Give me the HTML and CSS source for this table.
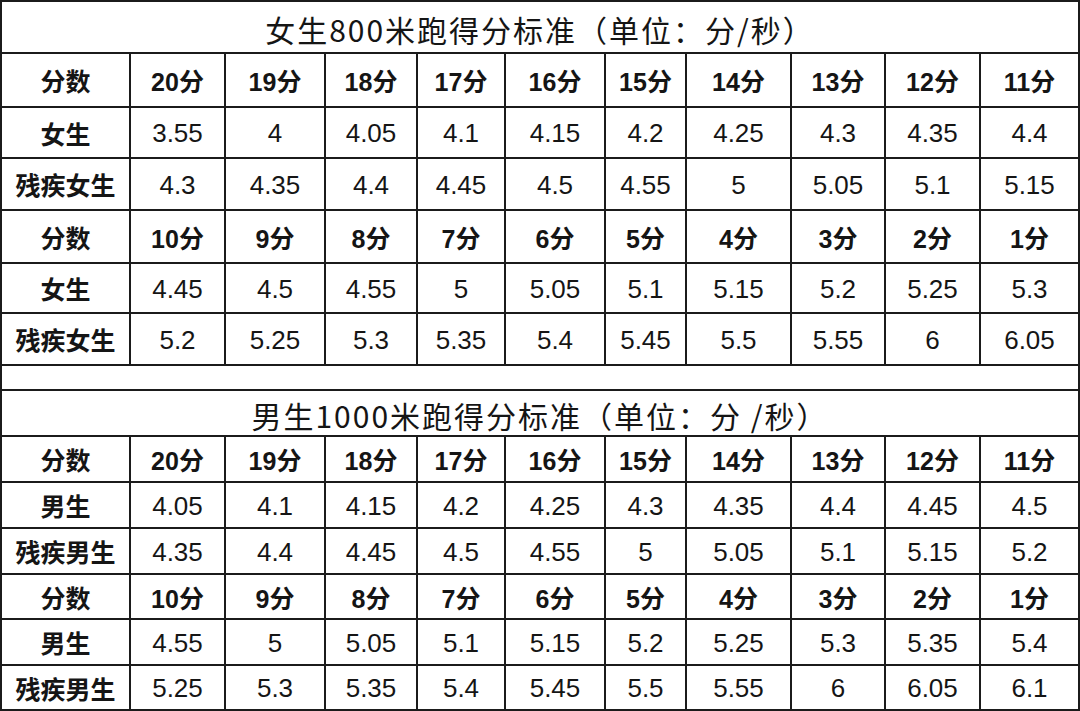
FILE: index.html
```html
<!DOCTYPE html>
<html lang="zh-CN">
<head>
<meta charset="utf-8">
<title>800米/1000米跑得分标准</title>
<link rel="stylesheet" href="styles.css">
</head>
<body>
<div class="sheet">
  <div class="title">女生800米跑得分标准（单位：分/秒）</div>

  <div class="c b">分数</div><div class="c b">20分</div><div class="c b">19分</div><div class="c b">18分</div><div class="c b">17分</div><div class="c b">16分</div><div class="c b">15分</div><div class="c b">14分</div><div class="c b">13分</div><div class="c b">12分</div><div class="c b">11分</div>

  <div class="c b">女生</div><div class="c">3.55</div><div class="c">4</div><div class="c">4.05</div><div class="c">4.1</div><div class="c">4.15</div><div class="c">4.2</div><div class="c">4.25</div><div class="c">4.3</div><div class="c">4.35</div><div class="c">4.4</div>

  <div class="c b">残疾女生</div><div class="c">4.3</div><div class="c">4.35</div><div class="c">4.4</div><div class="c">4.45</div><div class="c">4.5</div><div class="c">4.55</div><div class="c">5</div><div class="c">5.05</div><div class="c">5.1</div><div class="c">5.15</div>

  <div class="c b">分数</div><div class="c b">10分</div><div class="c b">9分</div><div class="c b">8分</div><div class="c b">7分</div><div class="c b">6分</div><div class="c b">5分</div><div class="c b">4分</div><div class="c b">3分</div><div class="c b">2分</div><div class="c b">1分</div>

  <div class="c b">女生</div><div class="c">4.45</div><div class="c">4.5</div><div class="c">4.55</div><div class="c">5</div><div class="c">5.05</div><div class="c">5.1</div><div class="c">5.15</div><div class="c">5.2</div><div class="c">5.25</div><div class="c">5.3</div>

  <div class="c b">残疾女生</div><div class="c">5.2</div><div class="c">5.25</div><div class="c">5.3</div><div class="c">5.35</div><div class="c">5.4</div><div class="c">5.45</div><div class="c">5.5</div><div class="c">5.55</div><div class="c">6</div><div class="c">6.05</div>

  <div class="spacer"></div>

  <div class="title">男生1000米跑得分标准（单位：分 /秒）</div>

  <div class="c b">分数</div><div class="c b">20分</div><div class="c b">19分</div><div class="c b">18分</div><div class="c b">17分</div><div class="c b">16分</div><div class="c b">15分</div><div class="c b">14分</div><div class="c b">13分</div><div class="c b">12分</div><div class="c b">11分</div>

  <div class="c b">男生</div><div class="c">4.05</div><div class="c">4.1</div><div class="c">4.15</div><div class="c">4.2</div><div class="c">4.25</div><div class="c">4.3</div><div class="c">4.35</div><div class="c">4.4</div><div class="c">4.45</div><div class="c">4.5</div>

  <div class="c b">残疾男生</div><div class="c">4.35</div><div class="c">4.4</div><div class="c">4.45</div><div class="c">4.5</div><div class="c">4.55</div><div class="c">5</div><div class="c">5.05</div><div class="c">5.1</div><div class="c">5.15</div><div class="c">5.2</div>

  <div class="c b">分数</div><div class="c b">10分</div><div class="c b">9分</div><div class="c b">8分</div><div class="c b">7分</div><div class="c b">6分</div><div class="c b">5分</div><div class="c b">4分</div><div class="c b">3分</div><div class="c b">2分</div><div class="c b">1分</div>

  <div class="c b">男生</div><div class="c">4.55</div><div class="c">5</div><div class="c">5.05</div><div class="c">5.1</div><div class="c">5.15</div><div class="c">5.2</div><div class="c">5.25</div><div class="c">5.3</div><div class="c">5.35</div><div class="c">5.4</div>

  <div class="c b">残疾男生</div><div class="c">5.25</div><div class="c">5.3</div><div class="c">5.35</div><div class="c">5.4</div><div class="c">5.45</div><div class="c">5.5</div><div class="c">5.55</div><div class="c">6</div><div class="c">6.05</div><div class="c">6.1</div>
</div>
</body>
</html>
```

FILE: styles.css
```css
html, body {
  margin: 0;
  padding: 0;
  background: #ffffff;
}

.sheet {
  box-sizing: border-box;
  width: 1080px;
  height: 711px;
  display: grid;
  grid-template-columns: 127px 93px 98px 90px 86px 98px 79px 103px 92px 93px 97px;
  grid-template-rows: 50px 52px 49px 50px 51px 48px 50px 23px 44px 44px 44px 44px 43px 44px 43px;
  gap: 2px;
  padding: 2px;
  background: #1b1b1b;
  font-family: "Liberation Sans", "Noto Sans CJK SC", sans-serif;
  color: #151515;
}

.c {
  background: #ffffff;
  display: flex;
  align-items: center;
  justify-content: center;
  font-size: 26px;
  font-weight: 400;
  padding-top: 2px;
  box-sizing: border-box;
  white-space: nowrap;
}

.b {
  font-size: 25px;
  font-weight: 700;
  padding-top: 0;
}

.title {
  grid-column: 1 / -1;
  background: #ffffff;
  display: flex;
  align-items: center;
  justify-content: center;
  font-family: "Noto Sans CJK SC", sans-serif;
  font-size: 30px;
  letter-spacing: 2px;
  font-weight: 400;
  padding-top: 4px;
  box-sizing: border-box;
  white-space: nowrap;
}

.spacer {
  grid-column: 1 / -1;
  background: #ffffff;
}
```
